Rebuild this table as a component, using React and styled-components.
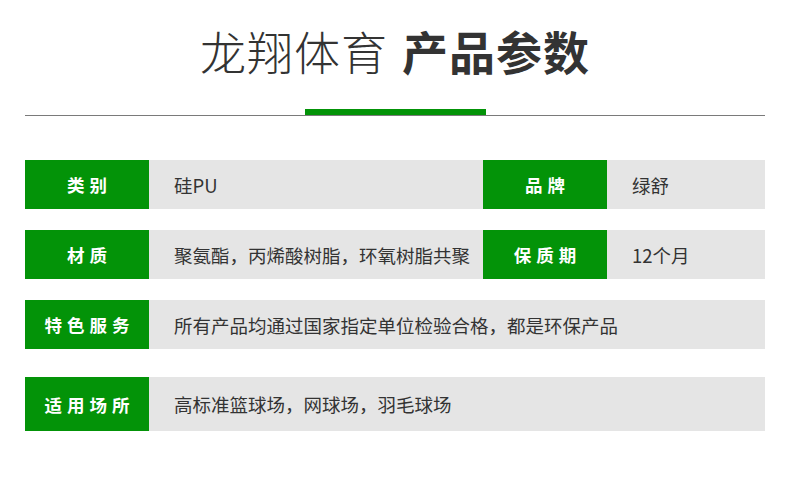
import React from 'react';
import styled, { createGlobalStyle } from 'styled-components';

const GlobalStyle = createGlobalStyle`
  html, body {
    margin: 0;
    padding: 0;
    background: #ffffff;
  }
  body {
    font-family: "Noto Sans CJK SC", "Noto Sans", sans-serif;
  }
`;

const green = '#039308';
const grey = '#e5e5e5';

const Page = styled.div`
  width: 790px;
  height: 480px;
  box-sizing: border-box;
  padding: 0 25px;
  overflow: hidden;
`;

const Title = styled.h1`
  margin: 0;
  padding-top: 17px;
  height: 109px;
  box-sizing: border-box;
  text-align: center;
  font-size: 46px;
  line-height: 66px;
  color: #333333;
  font-weight: 300;
  letter-spacing: 1px;
  strong {
    font-weight: 700;
    margin-left: 14px;
  }
`;

const Divider = styled.div`
  display: flex;
  justify-content: center;
  border-bottom: 1px solid #7a7a7a;
  margin-bottom: 44px;
`;

const Accent = styled.div`
  width: 181px;
  height: 6px;
  background: ${green};
`;

const Table = styled.div`
  display: flex;
  flex-direction: column;
`;

const Row = styled.div`
  display: flex;
  height: ${(props) => props.h || 49}px;
  margin-top: ${(props) => props.gap || 0}px;
`;

const Label = styled.div`
  flex: 0 0 124px;
  display: flex;
  align-items: center;
  justify-content: center;
  background: ${green};
  color: #ffffff;
  font-size: 17.5px;
  font-weight: 700;
  letter-spacing: 5px;
  text-indent: 5px;
`;

const Value = styled.div`
  flex: ${(props) => (props.w ? `0 0 ${props.w}px` : '1 1 auto')};
  display: flex;
  align-items: center;
  padding-left: 25px;
  background: ${grey};
  color: #333333;
  font-size: 18.5px;
  white-space: nowrap;
  overflow: hidden;
  box-sizing: border-box;
`;

const rows = [
  { gap: 0, cells: [['类别', '硅PU', 334], ['品牌', '绿舒']] },
  { gap: 21, cells: [['材质', '聚氨酯，丙烯酸树脂，环氧树脂共聚', 334], ['保质期', '12个月']] },
  { gap: 21, cells: [['特色服务', '所有产品均通过国家指定单位检验合格，都是环保产品']] },
  { gap: 28, h: 54, cells: [['适用场所', '高标准篮球场，网球场，羽毛球场']] },
];

export default function App() {
  return (
    <Page>
      <GlobalStyle />
      <Title>
        龙翔体育<strong>产品参数</strong>
      </Title>
      <Divider>
        <Accent />
      </Divider>
      <Table>
        {rows.map((row, i) => (
          <Row key={i} gap={row.gap} h={row.h}>
            {row.cells.map(([label, value, w]) => (
              <React.Fragment key={label}>
                <Label>{label}</Label>
                <Value w={w}>{value}</Value>
              </React.Fragment>
            ))}
          </Row>
        ))}
      </Table>
    </Page>
  );
}
